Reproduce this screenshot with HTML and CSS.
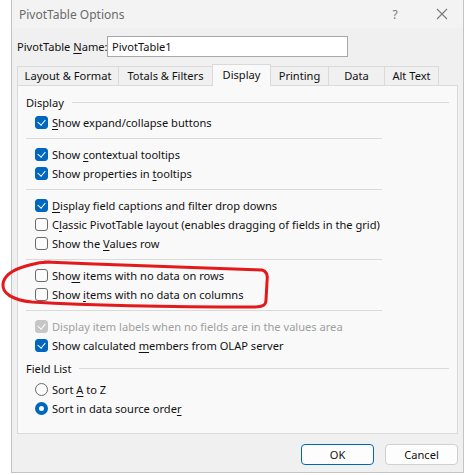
FILE: index.html
```html
<!DOCTYPE html>
<html>
<head>
<meta charset="utf-8">
<link rel="stylesheet" href="styles.css">
</head>
<body>
<div class="dialog">
  <div class="titlebar">
    <span class="title">PivotTable Options</span>
    <span class="help">?</span>
    <span class="close"><svg width="12" height="12" viewBox="0 0 12 12"><path d="M1 1 L11 11 M11 1 L1 11" stroke="#7a7a7a" stroke-width="1.1" fill="none"/></svg></span>
  </div>
  <div class="body">
    <div class="namerow">
      <span class="namelabel">PivotTable <u>N</u>ame:</span>
      <div class="textbox">PivotTable1</div>
    </div>
    <div class="tabs">
      <div class="tab t1">Layout &amp; Format</div>
      <div class="tab t2">Totals &amp; Filters</div>
      <div class="tab t3 active">Display</div>
      <div class="tab t4">Printing</div>
      <div class="tab t5">Data</div>
      <div class="tab t6">Alt Text</div>
    </div>
    <div class="panel">
      <div class="group">
        <div class="glabel"><span>Display</span><div class="gline"></div></div>
        <div class="row"><span class="cb on"></span><span><u>S</u>how expand/collapse buttons</span></div>
        <div class="sep"></div>
        <div class="row"><span class="cb on"></span><span>Show <u>c</u>ontextual tooltips</span></div>
        <div class="row"><span class="cb on"></span><span>Show properties in <u>t</u>ooltips</span></div>
        <div class="sep"></div>
        <div class="row"><span class="cb on"></span><span><u>D</u>isplay field captions and filter drop downs</span></div>
        <div class="row"><span class="cb"></span><span>C<u>l</u>assic PivotTable layout (enables dragging of fields in the grid)</span></div>
        <div class="row"><span class="cb"></span><span>Show the <u>V</u>alues row</span></div>
        <div class="sep"></div>
        <div class="row"><span class="cb"></span><span>Sho<u>w</u> items with no data on rows</span></div>
        <div class="row"><span class="cb"></span><span>Show <u>i</u>tems with no data on columns</span></div>
        <div class="sep"></div>
        <div class="row disabled"><span class="cb on dis"></span><span>Display item labels when no fields are in the values area</span></div>
        <div class="row"><span class="cb on"></span><span>Show calculated <u>m</u>embers from OLAP server</span></div>
      </div>
      <div class="group g2">
        <div class="glabel"><span>Field List</span><div class="gline"></div></div>
        <div class="row"><span class="rb"></span><span>Sort <u>A</u> to Z</span></div>
        <div class="row"><span class="rb on"></span><span>Sort in data source orde<u>r</u></span></div>
      </div>
    </div>
    <div class="buttons">
      <div class="btn default">OK</div>
      <div class="btn">Cancel</div>
    </div>
  </div>
</div>
<svg class="annot" width="466" height="475" viewBox="0 0 466 475">
  <path d="M45 262 C120 265 200 268 262 270 C267 271 268 275 267 282 L266 300 C266 305 263 307 255 307 C180 307 100 306 32 302 C12 300 2 293 3 284 C4 276 12 270 26 266 C33 264 38 262 50 262" stroke="#e3191c" stroke-width="3" fill="none" stroke-linecap="round" stroke-linejoin="round"/>
</svg>
</body>
</html>
```

FILE: styles.css
```css
html, body {
  margin: 0;
  padding: 0;
  background: #ffffff;
}
body {
  font-family: "Noto Sans", "Open Sans", sans-serif;
  font-size: 11.1px;
  color: #111111;
  position: relative;
  width: 466px;
  height: 475px;
  overflow: hidden;
}
u { text-decoration-thickness: 1px; text-underline-offset: 2px; }
.dialog {
  margin-left: 11px;
  width: 453px;
  height: 473px;
  box-sizing: border-box;
  border-left: 1px solid #c4c4c4;
  border-right: 1px solid #c4c4c4;
  border-bottom: 1px solid #c4c4c4;
  background: #f0f0f0;
  display: flex;
  flex-direction: column;
}
.titlebar {
  height: 28px;
  background: #f3f3f3;
  display: flex;
  align-items: center;
  padding-left: 7px;
  font-size: 12px;
}
.title {
  color: #6b6b6b;
  flex: 1;
}
.help {
  color: #7a7a7a;
  width: 14px;
  text-align: center;
  margin-right: 34px;
}
.close {
  width: 12px;
  height: 12px;
  margin-right: 15px;
  display: flex;
}
.body {
  flex: 1;
  padding: 8px 5px 0 5px;
  display: flex;
  flex-direction: column;
}
.namerow {
  display: flex;
  align-items: center;
  height: 21px;
  white-space: nowrap;
}
.namelabel { width: 90px; }
.textbox {
  width: 241px;
  height: 21px;
  box-sizing: border-box;
  background: #ffffff;
  border: 1px solid #a8a8a8;
  padding-left: 4px;
  line-height: 19px;
}
.tabs {
  display: flex;
  align-items: flex-end;
  height: 21px;
  margin-top: 7px;
  position: relative;
  z-index: 1;
  white-space: nowrap;
}
.tab {
  height: 19px;
  box-sizing: border-box;
  border: 1px solid #dadada;
  border-bottom: none;
  border-left: none;
  text-align: center;
  line-height: 18px;
  background: #f0f0f0;
}
.tab.t1 { width: 102px; border-left: 1px solid #dadada; }
.tab.t2 { width: 94px; }
.tab.t3 { width: 58px; }
.tab.t4 { width: 58px; }
.tab.t5 { width: 56px; }
.tab.t6 { width: 54px; }
.tab.active {
  height: 22px;
  background: #f9f9f9;
  border-left: 1px solid #dadada;
  margin-left: -1px;
  margin-bottom: -1px;
  line-height: 19px;
  width: 59px;
}
.panel {
  width: 441px;
  height: 349px;
  box-sizing: border-box;
  border: 1px solid #dadada;
  background: #f9f9f9;
  padding: 8px 8px 0 8px;
}
.glabel {
  display: flex;
  align-items: center;
  height: 17px;
  margin-bottom: 2px;
}
.gline {
  flex: 1;
  height: 1px;
  background: #dadada;
  margin-left: 8px;
}
.row {
  display: flex;
  align-items: center;
  height: 19px;
  padding-left: 9px;
  white-space: nowrap;
}
.sep {
  width: 356px;
  height: 1px;
  background: #dadada;
  margin: 6px 0 6px 0;
}
.cb {
  width: 13px;
  height: 13px;
  box-sizing: border-box;
  border: 1px solid #6b6b6b;
  border-radius: 3px;
  background: #fbfbfb;
  margin-right: 4px;
  flex: none;
  position: relative;
}
.cb.on {
  background: #0067c0;
  border-color: #0067c0;
}
.cb.on::after {
  content: "";
  position: absolute;
  left: 3px;
  top: 1px;
  width: 4px;
  height: 6px;
  border-right: 1.2px solid #ffffff;
  border-bottom: 1.2px solid #ffffff;
  transform: rotate(40deg);
}
.cb.dis {
  background: #c6c6c6;
  border-color: #c6c6c6;
}
.disabled { color: #a0a0a0; }
.g2 { margin-top: 5px; }
.g2 .glabel { margin-bottom: 3px; }
.rb {
  width: 13px;
  height: 13px;
  box-sizing: border-box;
  border: 1px solid #6b6b6b;
  border-radius: 50%;
  background: #fbfbfb;
  margin-right: 4px;
  flex: none;
}
.rb.on {
  border: 4px solid #0067c0;
  background: #ffffff;
}
.buttons {
  display: flex;
  justify-content: flex-end;
  gap: 11px;
  margin-top: 10px;
  width: 441px;
}
.btn {
  width: 73px;
  height: 21px;
  box-sizing: border-box;
  border: 1px solid #d0d0d0;
  border-radius: 4px;
  background: #fdfdfd;
  text-align: center;
  line-height: 19px;
}
.btn.default {
  border-color: #0067c0;
}
.annot {
  position: absolute;
  left: 0;
  top: 0;
  pointer-events: none;
}
```
